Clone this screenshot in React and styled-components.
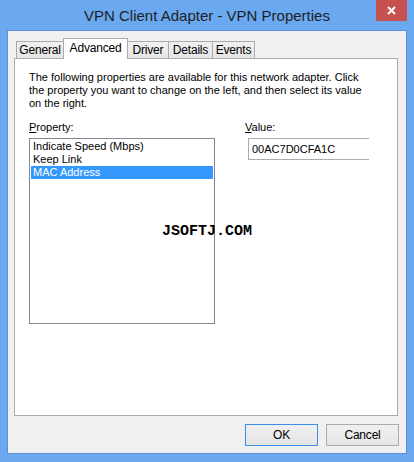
import React from "react";
import styled, { createGlobalStyle } from "styled-components";

const GlobalStyle = createGlobalStyle`
  html, body {
    margin: 0;
    padding: 0;
  }
  body {
    font-family: "Liberation Sans", Arial, sans-serif;
    color: #000;
  }
`;

const Window = styled.div`
  width: 414px;
  height: 462px;
  box-sizing: border-box;
  background: #6aa9f0;
  display: flex;
  flex-direction: column;
`;

const TitleBar = styled.div`
  height: 30px;
  display: grid;
  grid-template-columns: 1fr auto 1fr;
  align-items: center;
`;

const Title = styled.div`
  grid-column: 2;
  font-size: 15px;
  color: #1e1e1e;
  white-space: nowrap;
  padding-top: 1px;
`;

const CloseButton = styled.div`
  grid-column: 3;
  justify-self: end;
  align-self: start;
  width: 31px;
  height: 21px;
  margin-right: 7px;
  background: #c75050;
  display: flex;
  align-items: center;
  justify-content: center;
`;

const Client = styled.div`
  flex: 1;
  margin: 0 7px 8px;
  border: 1px solid #5a91d8;
  background: #f0f0f0;
  display: flex;
  flex-direction: column;
  padding: 7px 8px 7px 6px;
`;

const TabStrip = styled.div`
  height: 21px;
  margin-bottom: -1px;
  padding-left: 2px;
  display: flex;
  align-items: flex-start;
  position: relative;
  z-index: 1;
`;

const Tab = styled.div`
  box-sizing: border-box;
  width: ${(p) => p.width}px;
  height: ${(p) => (p.active ? 21 : 17)}px;
  margin-top: ${(p) => (p.active ? 0 : 3)}px;
  margin-left: -1px;
  &:first-child {
    margin-left: 0;
  }
  border: 1px solid #acacac;
  border-bottom: none;
  background: ${(p) =>
    p.active ? "#fff" : "linear-gradient(#f0f0f0, #e5e5e5)"};
  position: relative;
  z-index: ${(p) => (p.active ? 2 : 1)};
  font-size: 12px;
  letter-spacing: -0.2px;
  display: flex;
  align-items: center;
  justify-content: center;
  padding-bottom: ${(p) => (p.active ? 3 : 0)}px;
`;

const Panel = styled.div`
  flex: 1;
  position: relative;
  background: #fff;
  border: 1px solid #acacac;
  padding: 12px 14px 0;
  font-size: 11px;
  line-height: 13px;
`;

const Description = styled.p`
  margin: 0;
`;

const Fields = styled.div`
  display: flex;
  margin-top: 11px;
`;

const Column = styled.div`
  width: ${(p) => p.width}px;
  margin-left: ${(p) => p.offset || 0}px;
  display: flex;
  flex-direction: column;
`;

const Label = styled.div`
  margin-bottom: 4px;
  u {
    text-decoration: underline;
    text-underline-offset: 1px;
  }
`;

const ListBox = styled.div`
  box-sizing: border-box;
  width: 186px;
  height: 186px;
  border: 1px solid #828790;
  padding: 1px;
`;

const ListItem = styled.div`
  height: 13px;
  padding-left: 2px;
  background: ${(p) => (p.selected ? "#3399ff" : "transparent")};
  color: ${(p) => (p.selected ? "#fff" : "#000")};
`;

const TextBox = styled.div`
  box-sizing: border-box;
  width: 121px;
  height: 22px;
  margin-left: 3px;
  border: 1px solid #abadb3;
  border-right: none;
  padding-left: 3px;
  display: flex;
  align-items: center;
`;

const Watermark = styled.div`
  position: absolute;
  left: 147px;
  top: 165px;
  font-family: "Liberation Mono", "DejaVu Sans Mono", monospace;
  font-weight: bold;
  font-size: 15px;
  line-height: 16px;
`;

const ButtonRow = styled.div`
  display: flex;
  justify-content: flex-end;
  gap: 8px;
  margin-top: 8px;
  margin-right: -1px;
`;

const Button = styled.div`
  box-sizing: border-box;
  width: 73px;
  height: 22px;
  border: 1px solid ${(p) => (p.primary ? "#3d8ee8" : "#acacac")};
  background: linear-gradient(#f0f0f0, #e5e5e5);
  font-size: 12px;
  letter-spacing: -0.2px;
  display: flex;
  align-items: center;
  justify-content: center;
`;

const tabs = [
  { name: "General", width: 48 },
  { name: "Advanced", width: 65, active: true },
  { name: "Driver", width: 42 },
  { name: "Details", width: 45 },
  { name: "Events", width: 43 },
];

const properties = ["Indicate Speed (Mbps)", "Keep Link", "MAC Address"];

export default function App() {
  return (
    <Window>
      <GlobalStyle />
      <TitleBar>
        <Title>VPN Client Adapter - VPN Properties</Title>
        <CloseButton>
          <svg width="9" height="9" viewBox="0 0 9 9">
            <path d="M1 1 L8 8 M8 1 L1 8" stroke="#fff" strokeWidth="2" />
          </svg>
        </CloseButton>
      </TitleBar>
      <Client>
        <TabStrip>
          {tabs.map((t) => (
            <Tab key={t.name} width={t.width} active={t.active}>
              {t.name}
            </Tab>
          ))}
        </TabStrip>
        <Panel>
          <Description>
            The following properties are available for this network adapter. Click
            <br />
            the property you want to change on the left, and then select its value
            <br />
            on the right.
          </Description>
          <Fields>
            <Column width={186}>
              <Label>
                <u>P</u>roperty:
              </Label>
              <ListBox>
                {properties.map((p) => (
                  <ListItem key={p} selected={p === "MAC Address"}>
                    {p}
                  </ListItem>
                ))}
              </ListBox>
            </Column>
            <Column width={124} offset={30}>
              <Label>
                <u>V</u>alue:
              </Label>
              <TextBox>00AC7D0CFA1C</TextBox>
            </Column>
          </Fields>
          <Watermark>JSOFTJ.COM</Watermark>
        </Panel>
        <ButtonRow>
          <Button primary>OK</Button>
          <Button>Cancel</Button>
        </ButtonRow>
      </Client>
    </Window>
  );
}
